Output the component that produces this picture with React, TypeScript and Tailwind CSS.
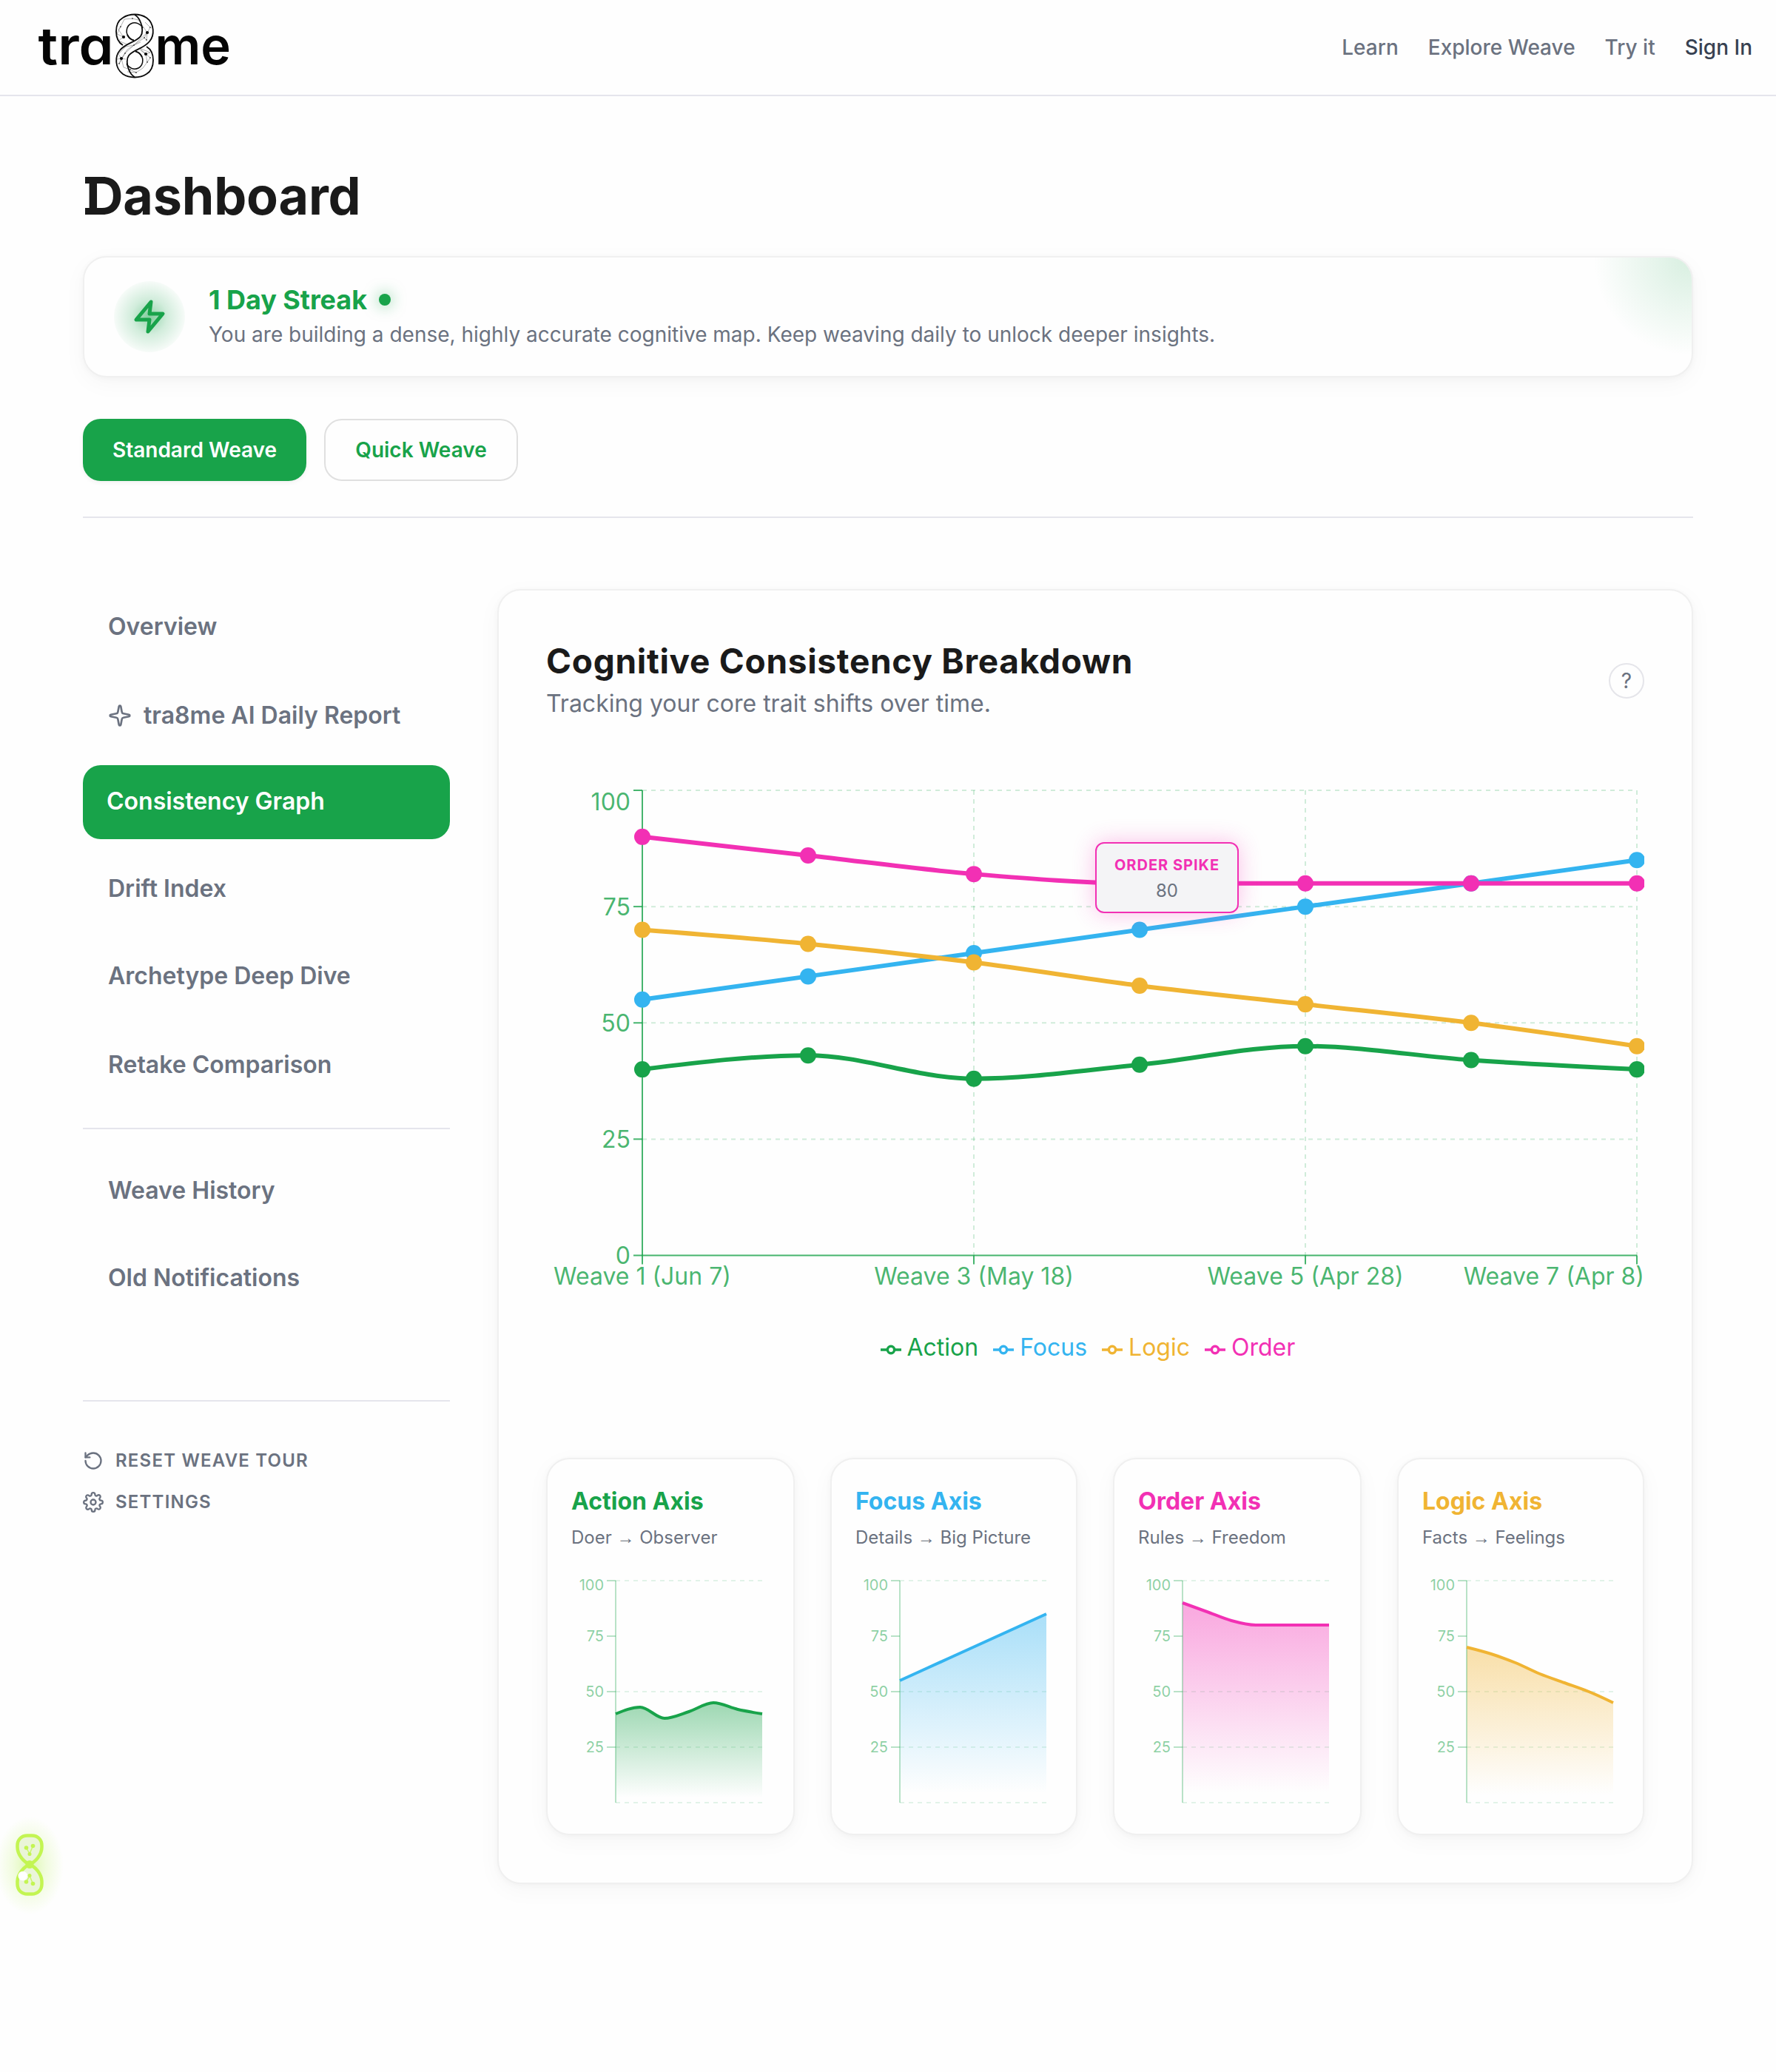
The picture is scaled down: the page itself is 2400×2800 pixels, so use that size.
import React from "react";
import { FiSettings, FiZap } from "react-icons/fi";
import { RotateCcw, Sparkle } from "lucide-react";

const GREEN = "#18a34a";
const BLUE = "#34b4f0";
const GOLD = "#f0b433";
const PINK = "#f230b4";

const series = [
  { name: "Action", color: GREEN, values: [40, 43, 38, 41, 45, 42, 40] },
  { name: "Focus", color: BLUE, values: [55, 60, 65, 70, 75, 80, 85] },
  { name: "Logic", color: GOLD, values: [70, 67, 63, 58, 54, 50, 45] },
  { name: "Order", color: PINK, values: [90, 86, 82, 80, 80, 80, 80] },
];

type Pt = [number, number];

function toPoints(values: number[], x: number, y: number, w: number, h: number): Pt[] {
  return values.map((v, i) => [x + (w * i) / (values.length - 1), y + h * (1 - v / 100)]);
}

/* Monotone cubic interpolation through evenly spaced points. */
function monotone(p: Pt[]): string {
  const n = p.length;
  const s: number[] = [];
  for (let i = 0; i < n - 1; i++) s.push((p[i + 1][1] - p[i][1]) / (p[i + 1][0] - p[i][0]));
  const t: number[] = new Array(n).fill(0);
  for (let i = 1; i < n - 1; i++) {
    const a = s[i - 1];
    const b = s[i];
    t[i] = (Math.sign(a) + Math.sign(b)) * Math.min(Math.abs(a), Math.abs(b), 0.5 * Math.abs((a + b) / 2)) || 0;
  }
  t[0] = (3 * s[0] - t[1]) / 2;
  t[n - 1] = (3 * s[n - 2] - t[n - 2]) / 2;
  let d = `M${p[0][0]},${p[0][1]}`;
  for (let i = 0; i < n - 1; i++) {
    const dx = (p[i + 1][0] - p[i][0]) / 3;
    d += `C${p[i][0] + dx},${p[i][1] + dx * t[i]},${p[i + 1][0] - dx},${p[i + 1][1] - dx * t[i + 1]},${p[i + 1][0]},${p[i + 1][1]}`;
  }
  return d;
}

/* Half of the ribbon; the other half is the same drawing turned by 180 degrees. */
function RibbonHalf() {
  return (
    <>
      <path d="M166,61C154,54 154,31 166,24C175,18 189,18 198,24C209,32 209,48 202,56C194,66 180,67 174,75C171,79 171,87 174,94C176,99 180,103 182,104" />
      <path d="M174,50C169,44 171,35 177,32C183,29 190,32 193,38" strokeWidth="1.500" />
      <path d="M172,47C174,51 178,54 181,54.500" />
    </>
  );
}

function Logo() {
  const net: Pt[] = [
    [167, 50], [163, 36], [179, 25], [199, 44], [195, 51], [203, 37], [198, 54], [181, 61],
    [164, 79], [169, 72], [197, 73], [203, 78], [161, 86], [199, 84], [184, 98], [176, 94],
  ];
  return (
    <svg width="330" height="128" viewBox="0 0 330 128" className="block">
      <g fill="#050505" fontFamily="Inter, sans-serif" fontSize="70" fontWeight="600" style={{ fontFeatureSettings: "'cv11'" }}>
        <text x="51.500" y="86.5" textLength="102" lengthAdjust="spacingAndGlyphs">tra</text>
        <text x="209.500" y="86.5" textLength="102.500" lengthAdjust="spacingAndGlyphs">me</text>
      </g>
      <g fill="none" stroke="#0a0a0a" strokeWidth="1.800">
        <RibbonHalf />
        <g transform="rotate(180 182 62)">
          <RibbonHalf />
        </g>
      </g>
      <path
        stroke="#222"
        strokeWidth=".45"
        fill="none"
        opacity=".8"
        d="M167 50L160 40L163 36L158 46L167 50L160 55L172 60M163 36L168 26L179 25L187 27L199 44L203 37L196 30M199 44L195 51L198 54L199 44L187 55L181 61L170 63L160 73L164 79M181 61L195 51M181 61L172 67L164 79L161 86L169 72L181 61L190 57M197 73L188 65L203 71L197 73L203 78L199 84L197 73L190 68M164 79L167 91L176 94L184 98L193 92L199 84M172 97L184 98M158 80L164 79L170 80"
      />
      <g fill="#050505">
        {net.map(([x, y], i) => (
          <circle key={i} cx={x} cy={y} r={[0, 3, 8, 10].includes(i) ? 2.1 : 0.8} />
        ))}
      </g>
    </svg>
  );
}

function Header() {
  return (
    <header className="flex h-[130px] items-center justify-between border-b-2 border-[#e5e5ec] pr-8">
      <Logo />
      <nav className="flex items-center gap-10 text-[28px] font-medium text-[#6b7280]">
        <span>Learn</span>
        <span>Explore Weave</span>
        <span>Try it</span>
        <span className="text-[#374151]">Sign In</span>
      </nav>
    </header>
  );
}

function StreakCard() {
  return (
    <section className="relative mt-9 flex h-[164px] items-center gap-8 overflow-hidden rounded-[32px] border-2 border-[#f0f0f0] bg-[#fefefe] px-10 shadow-[0_8px_32px_rgba(0,0,0,0.035),0_2px_8px_rgba(0,0,0,0.03)]">
      <div className="absolute -right-[124px] -top-[124px] size-[256px] bg-[radial-gradient(closest-side,rgba(22,163,74,0.16),rgba(22,163,74,0))]" />
      <div className="flex size-24 items-center justify-center rounded-full bg-[radial-gradient(closest-side,rgba(22,163,74,0.46),rgba(22,163,74,0.19)_50%,rgba(22,163,74,0.03))]">
        <FiZap size={48} color={GREEN} strokeWidth={2.5} fill="rgba(22,163,74,0.12)" />
      </div>
      <div>
        <div className="flex items-center gap-4">
          <h2 className="text-[36px] leading-[44px] font-bold tracking-[-0.05px] text-[#18a34a]">1 Day Streak</h2>
          <span className="-mt-px size-4 rounded-full bg-[#18a34a] shadow-[0_0_20px_rgba(22,163,74,0.6)]" />
        </div>
        <p className="mt-1 text-[28px] leading-[42px] text-[#6b7280]">
          You are building a dense, highly accurate cognitive map. Keep weaving daily to unlock deeper insights.
        </p>
      </div>
    </section>
  );
}

function Sidebar() {
  return (
    <aside className="w-[496px] shrink-0 text-[32px] font-semibold text-[#6b7280]">
      <div className="flex h-[101px] items-center pl-[34px]">Overview</div>
      <div className="mt-[19px] flex h-[102px] items-center gap-4 pl-[34px]">
        <Sparkle size={32} strokeWidth={2} />
        tra8me AI Daily Report
      </div>
      <div className="mt-4 flex h-[100px] items-center rounded-[24px] bg-[#18a34a] pb-[3px] pl-8 text-white">
        Consistency Graph
      </div>
      <div className="mt-4 flex h-[101px] items-center pl-[34px]">Drift Index</div>
      <div className="mt-[17px] flex h-[101px] items-center pl-[34px]">Archetype Deep Dive</div>
      <div className="mt-[19px] flex h-[101px] items-center pl-[34px]">Retake Comparison</div>
      <div className="mt-[35px] border-t-2 border-[#e5e5ec] pt-8">
        <div className="flex h-[101px] items-center pl-[34px]">Weave History</div>
        <div className="mt-[17px] flex h-[101px] items-center pl-[34px]">Old Notifications</div>
      </div>
      <div className="mt-[115px] border-t-2 border-[#e5e5ec] pt-[60px] text-[24px] tracking-[1.2px]">
        <div className="flex h-10 items-center gap-4">
          <RotateCcw size={28} strokeWidth={2} />
          RESET WEAVE TOUR
        </div>
        <div className="mt-4 flex h-10 items-center gap-4">
          <FiSettings size={28} strokeWidth={2} />
          SETTINGS
        </div>
      </div>
    </aside>
  );
}

function MainChart() {
  const L = 130;
  const T = 20;
  const W = 1344;
  const H = 628.5;
  const yOf = (v: number) => T + H * (1 - v / 100);
  return (
    <svg width="1484" height="712" viewBox="0 0 1484 712" className="block" fontFamily="Inter, sans-serif" fontSize="32">
      <g stroke={GREEN} strokeOpacity=".2" strokeWidth="2" strokeDasharray="6 6">
        {[100, 75, 50, 25].map((v) => (
          <line key={v} x1={L} x2={L + W} y1={yOf(v)} y2={yOf(v)} />
        ))}
        {[2, 4, 6].map((i) => (
          <line key={i} x1={L + 224 * i} x2={L + 224 * i} y1={T} y2={T + H} />
        ))}
      </g>
      <g stroke={GREEN} strokeOpacity=".8" strokeWidth="2">
        <line x1={L} x2={L} y1={T} y2={T + H} />
        <line x1={L} x2={L + W} y1={T + H} y2={T + H} />
        {[100, 75, 50, 25, 0].map((v) => (
          <line key={v} x1={L - 12} x2={L} y1={yOf(v)} y2={yOf(v)} />
        ))}
        {[0, 2, 4, 6].map((i) => (
          <line key={i} x1={L + 224 * i} x2={L + 224 * i} y1={T + H} y2={T + H + 12} />
        ))}
      </g>
      <g fill={GREEN} fillOpacity=".8">
        <g textAnchor="end">
          <text x={L - 16} y="46.500">100</text>
          {[75, 50, 25, 0].map((v) => (
            <text key={v} x={L - 16} y={yOf(v) + 11.5}>{v}</text>
          ))}
          <text x="1484" y="688">Weave 7 (Apr 8)</text>
        </g>
        <g textAnchor="middle">
          <text x={L} y="688">Weave 1 (Jun 7)</text>
          <text x={L + 448} y="688">Weave 3 (May 18)</text>
          <text x={L + 896} y="688">Weave 5 (Apr 28)</text>
        </g>
      </g>
      {series.map((s) => {
        const pts = toPoints(s.values, L, T, W, H);
        return (
          <g key={s.name}>
            <path d={monotone(pts)} fill="none" stroke={s.color} strokeWidth="6" />
            {pts.map(([x, y], i) => (
              <circle key={i} cx={x} cy={y} r="11" fill={s.color} />
            ))}
          </g>
        );
      })}
    </svg>
  );
}

function Legend() {
  return (
    <div className="mt-[29px] flex h-16 items-center gap-5 pl-[451.5px] text-[32px]">
      {series.map((s) => (
        <div key={s.name} className="flex items-center gap-2" style={{ color: s.color }}>
          <svg width="28" height="28" viewBox="0 0 32 32" className="mt-[6px]" fill="none" stroke="currentColor" strokeWidth="4">
            <path d="M0,16h10.667A5.333,5.333,0,1,1,21.333,16H32M21.333,16A5.333,5.333,0,1,1,10.667,16" />
          </svg>
          <span>{s.name}</span>
        </div>
      ))}
    </div>
  );
}

function MiniCard({ index, from, to }: { index: number; from: string; to: string }) {
  const s = series[index];
  const L = 60;
  const T = 10;
  const W = 198;
  const H = 300;
  const yOf = (v: number) => T + H * (1 - v / 100);
  const line = monotone(toPoints(s.values, L, T, W, H));
  return (
    <div className="h-[510px] rounded-[32px] border-2 border-[#f0f0f0] bg-[#fefefe] px-8 pt-[33px] shadow-[0_8px_32px_rgba(0,0,0,0.035),0_2px_8px_rgba(0,0,0,0.03)]">
      <h3 className="text-[32px] leading-[48px] font-bold" style={{ color: s.color }}>{s.name} Axis</h3>
      <p className="mt-[7px] text-[24px] leading-9 text-[#6b7280]">
        {from} <span className="font-['Liberation_Sans']">→</span> {to}
      </p>
      <svg width="266" height="320" viewBox="0 0 266 320" className="mt-[30px] block" fontFamily="Inter, sans-serif" fontSize="20">
        <defs>
          <linearGradient id={`fade-${s.name}`} x1="0" y1="0" x2="0" y2="1">
            <stop offset="5%" stopColor={s.color} stopOpacity=".4" />
            <stop offset="95%" stopColor={s.color} stopOpacity="0" />
          </linearGradient>
        </defs>
        <g stroke={GREEN} strokeOpacity=".12" strokeWidth="2" strokeDasharray="6 6">
          {[100, 50, 25, 0].map((v) => (
            <line key={v} x1={L} x2={L + W} y1={yOf(v)} y2={yOf(v)} />
          ))}
        </g>
        <path d={`${line}V${T + H}H${L}Z`} fill={`url(#fade-${s.name})`} />
        <g stroke={GREEN} strokeOpacity=".3" strokeWidth="2">
          <line x1={L} x2={L} y1={T} y2={T + H} />
          {[100, 75, 50, 25].map((v) => (
            <line key={v} x1={L - 12} x2={L} y1={yOf(v)} y2={yOf(v)} />
          ))}
        </g>
        <g fill={GREEN} fillOpacity=".5" textAnchor="end">
          <text x={L - 16} y="23">100</text>
          {[75, 50, 25].map((v) => (
            <text key={v} x={L - 16} y={yOf(v) + 7}>{v}</text>
          ))}
        </g>
        <path d={line} fill="none" stroke={s.color} strokeWidth="4" />
      </svg>
    </div>
  );
}

function FloatingEight() {
  return (
    <svg width="120" height="180" viewBox="-20 2430 120 180" className="absolute -left-5 top-[2430px]">
      <defs>
        <radialGradient id="halo">
          <stop offset="0%" stopColor="#bef264" stopOpacity=".5" />
          <stop offset="50%" stopColor="#bef264" stopOpacity=".2" />
          <stop offset="100%" stopColor="#bef264" stopOpacity="0" />
        </radialGradient>
      </defs>
      <ellipse cx="40" cy="2521" rx="46" ry="66" fill="url(#halo)" />
      <g fill="#eaf5d8" stroke="#c3f552" strokeWidth="4.500">
        <path d="M40 2519C33 2517 23.500 2507 23.500 2496V2494C23.500 2486 29 2480.500 37 2480.500H43C51 2480.500 56.500 2486 56.500 2494V2496C56.500 2507 47 2517 40 2519Z" />
        <path d="M40 2520C33 2522 23.500 2532 23.500 2543V2546C23.500 2554 29 2559.500 37 2559.500H43C51 2559.500 56.500 2554 56.500 2546V2543C56.500 2532 47 2522 40 2520Z" />
      </g>
      <g fill="#c3f552" stroke="#c3f552">
        <circle cx="40" cy="2519.500" r="5.500" stroke="none" />
        <path d="M35.500 2497L40 2505L44.500 2494.500M35.500 2543L40 2535L44.500 2545.500" fill="none" strokeWidth="1.500" opacity=".8" />
        <g stroke="none">
          <circle cx="35.500" cy="2497" r="2.800" />
          <circle cx="44.500" cy="2494.500" r="2.800" />
          <circle cx="40" cy="2505.500" r="2.500" />
          <circle cx="40" cy="2534.500" r="2.500" />
          <circle cx="35.500" cy="2543" r="2.800" />
          <circle cx="44.500" cy="2545.500" r="2.800" />
        </g>
      </g>
      <circle cx="30.800" cy="2535" r="6.300" fill="#fff" />
    </svg>
  );
}

export default function App() {
  return (
    <div className="relative min-h-[2800px] w-[2400px] overflow-hidden bg-[#fefefe] font-['Inter',sans-serif]">
      <Header />
      <main className="px-28 pt-[90px]">
        <h1 className="relative pl-1 text-[70px] leading-[90px] font-bold tracking-[-0.2px] text-[#1a1a1a]">
          Dashboard
          <span className="absolute left-[3px] top-[19px] h-[9px] w-2 bg-[#1a1a1a]" />
          <span className="absolute left-[3px] top-[61px] h-[9px] w-2 bg-[#1a1a1a]" />
        </h1>
        <StreakCard />
        <div className="mt-14 flex gap-6 text-[28px] font-semibold">
          <button className="h-[84px] w-[302px] rounded-[24px] bg-[#18a34a] text-white shadow-[0_2px_6px_rgba(0,0,0,0.06)]">
            Standard Weave
          </button>
          <button className="h-[84px] w-[262px] rounded-[24px] border-2 border-[#e0e0e0] text-[#18a34a]">Quick Weave</button>
        </div>
        <div className="mt-12 border-t-2 border-[#e5e5ec]" />
        <div className="mt-24 flex items-start gap-16">
          <Sidebar />
          <section className="h-[1750px] flex-1 rounded-[32px] border-2 border-[#f0f0f0] bg-[#fefefe] p-16 shadow-[0_8px_32px_rgba(0,0,0,0.035),0_2px_8px_rgba(0,0,0,0.03)]">
            <div className="flex h-[116px] items-center justify-between">
              <div className="pt-0.5">
                <h2 className="text-[46px] leading-[60px] font-bold tracking-[0.7px] text-[#1a1a1a]">
                  Cognitive Consistency Breakdown
                </h2>
                <p className="text-[32px] leading-[56px] text-[#6b7280]">Tracking your core trait shifts over time.</p>
              </div>
              <span className="flex size-12 items-center justify-center rounded-full border-2 border-[#e5e5ea] text-[28px] text-[#6b7280]">
                ?
              </span>
            </div>
            <div className="relative mt-[70px]">
              <MainChart />
              <div className="absolute left-[742px] top-[90px] flex h-24 w-[194px] flex-col items-center rounded-[12px] border-2 border-[#f230b4] bg-[#f4f4f6] pt-[15px] shadow-[0_0_30px_rgba(242,48,180,0.3)]">
                <div className="text-[20px] leading-7 font-bold tracking-[1px] text-[#f230b4]">ORDER SPIKE</div>
                <div className="mt-[3px] text-[24px] leading-9 text-[#6b7280]">80</div>
              </div>
            </div>
            <Legend />
            <div className="mt-[117px] grid grid-cols-[336px_334px_336px_334px] gap-12">
              <MiniCard index={0} from="Doer" to="Observer" />
              <MiniCard index={1} from="Details" to="Big Picture" />
              <MiniCard index={3} from="Rules" to="Freedom" />
              <MiniCard index={2} from="Facts" to="Feelings" />
            </div>
          </section>
        </div>
      </main>
      <FloatingEight />
    </div>
  );
}
